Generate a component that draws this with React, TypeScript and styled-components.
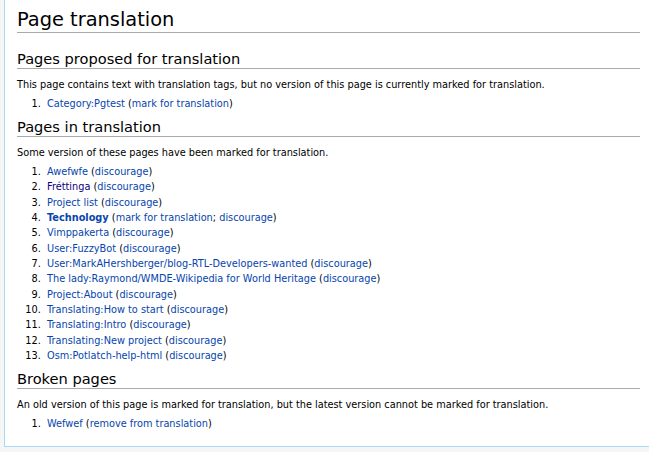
import React from 'react';
import styled, { createGlobalStyle } from 'styled-components';

const GlobalStyle = createGlobalStyle`
  html, body {
    margin: 0;
    padding: 0;
    background: #f6f6f6;
  }
  @counter-style wide-decimal {
    system: extends decimal;
    suffix: ".\\00a0\\00a0";
  }
`;

const Page = styled.div`
  background: #f6f6f6;
  padding-left: 4px;
  min-height: 452px;
  font-family: "DejaVu Sans", sans-serif;
  color: #000;
`;

const Content = styled.div`
  background: #fff;
  border-left: 1px solid #a7d7f9;
  border-bottom: 1px solid #a7d7f9;
  padding: 8px 9px 15px 12px;
  font-size: 9.75px;
  line-height: 15.33px;
`;

const Title = styled.h1`
  margin: 0;
  font-size: 19.4px;
  font-weight: normal;
  line-height: 24px;
  border-bottom: 1px solid #aaa;
`;

const Heading = styled.h2<{ $first?: boolean }>`
  margin: ${(p) => (p.$first ? '17px' : '7px')} 0 0 0;
  font-size: 14.6px;
  font-weight: normal;
  line-height: 18px;
  border-bottom: 1px solid #aaa;
`;

const Para = styled.p`
  margin: 8px 0 3.5px 0;
`;

const List = styled.ol`
  margin: 0 0 0 30px;
  padding: 0;
  list-style: wide-decimal;
`;

const Item = styled.li`
  margin: 0;
`;

const Link = styled.a<{ $visited?: boolean; $bold?: boolean }>`
  color: ${(p) => (p.$visited ? '#0b0080' : '#0645ad')};
  font-weight: ${(p) => (p.$bold ? 'bold' : 'normal')};
  text-decoration: none;
`;

type Entry = { name: string; visited?: boolean; bold?: boolean; actions: string[] };

const proposed: Entry[] = [{ name: 'Category:Pgtest', actions: ['mark for translation'] }];

const inTranslation: Entry[] = [
  { name: 'Awefwfe', actions: ['discourage'] },
  { name: 'Fréttinga', visited: true, actions: ['discourage'] },
  { name: 'Project list', actions: ['discourage'] },
  { name: 'Technology', bold: true, actions: ['mark for translation', 'discourage'] },
  { name: 'Vimppakerta', actions: ['discourage'] },
  { name: 'User:FuzzyBot', actions: ['discourage'] },
  { name: 'User:MarkAHershberger/blog-RTL-Developers-wanted', actions: ['discourage'] },
  { name: 'The lady:Raymond/WMDE-Wikipedia for World Heritage', actions: ['discourage'] },
  { name: 'Project:About', actions: ['discourage'] },
  { name: 'Translating:How to start', actions: ['discourage'] },
  { name: 'Translating:Intro', actions: ['discourage'] },
  { name: 'Translating:New project', actions: ['discourage'] },
  { name: 'Osm:Potlatch-help-html', actions: ['discourage'] },
];

const broken: Entry[] = [{ name: 'Wefwef', actions: ['remove from translation'] }];

const PageList = ({ entries }: { entries: Entry[] }) => (
  <List>
    {entries.map((e) => (
      <Item key={e.name}>
        <Link href="#" $visited={e.visited} $bold={e.bold}>
          {e.name}
        </Link>{' '}
        (
        {e.actions.map((a, i) => (
          <React.Fragment key={a}>
            {i > 0 && '; '}
            <Link href="#">{a}</Link>
          </React.Fragment>
        ))}
        )
      </Item>
    ))}
  </List>
);

export default function App() {
  return (
    <Page>
      <GlobalStyle />
      <Content>
        <Title>Page translation</Title>

        <Heading $first>Pages proposed for translation</Heading>
        <Para>
          This page contains text with translation tags, but no version of this page is currently marked
          for translation.
        </Para>
        <PageList entries={proposed} />

        <Heading>Pages in translation</Heading>
        <Para>Some version of these pages have been marked for translation.</Para>
        <PageList entries={inTranslation} />

        <Heading>Broken pages</Heading>
        <Para>
          An old version of this page is marked for translation, but the latest version cannot be marked
          for translation.
        </Para>
        <PageList entries={broken} />
      </Content>
    </Page>
  );
}
